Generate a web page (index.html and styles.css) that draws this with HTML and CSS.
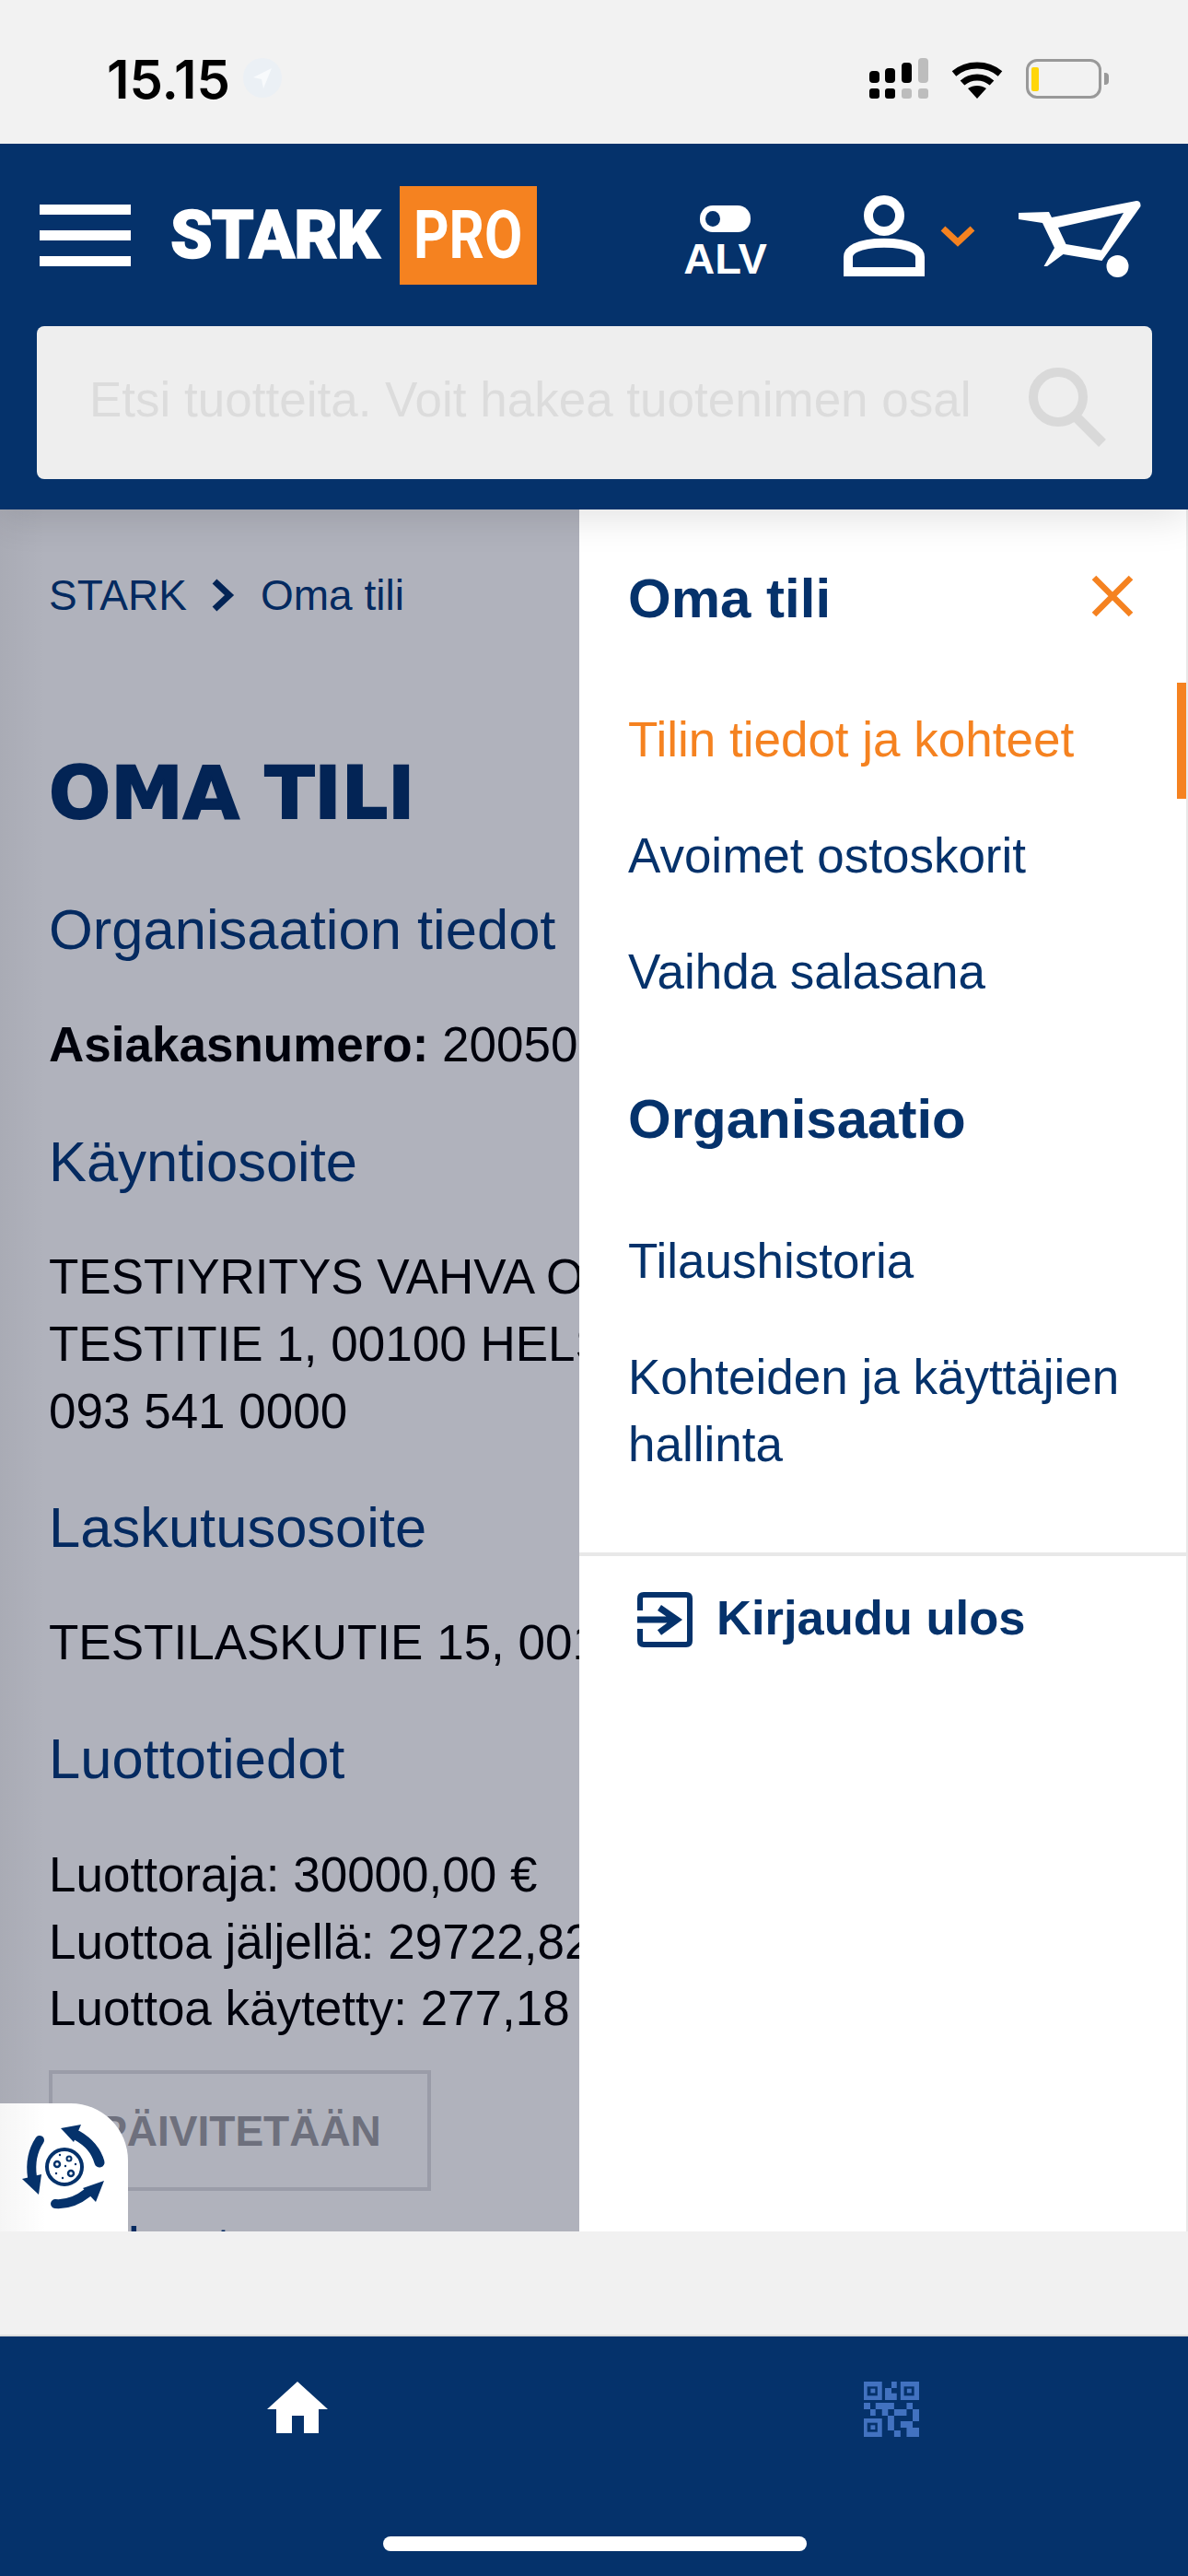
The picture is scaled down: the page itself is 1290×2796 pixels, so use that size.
FILE: index.html
```html
<!DOCTYPE html>
<html lang="fi">
<head>
    <meta charset="UTF-8">
    <meta name="viewport" content="width=device-width, initial-scale=1.0">
    <title>Oma tili - STARK PRO</title>
    <link rel="stylesheet" href="styles.css">
</head>
<body>
    <!-- Phone status bar -->
    <div class="status-bar">
        <div class="status-left">
            <span class="status-time">15.15</span>
            <span class="location-pill">
                <svg width="22" height="24" viewBox="0 0 22 24"><path d="M21 1 L1 11 L10 13 L12 23 Z" fill="#f8fafc"/></svg>
            </span>
        </div>
        <div class="status-right">
            <svg class="signal-icon" width="64" height="44" viewBox="0 0 64 44">
                <rect x="0" y="14" width="11" height="13" rx="4" fill="#000"/>
                <rect x="17" y="11" width="11" height="16" rx="4" fill="#000"/>
                <rect x="35" y="5" width="11" height="22" rx="4" fill="#000"/>
                <rect x="53" y="0" width="11" height="27" rx="4" fill="#bdbdbd"/>
                <rect x="0" y="33" width="11" height="11" rx="3" fill="#000"/>
                <rect x="17" y="33" width="11" height="11" rx="3" fill="#000"/>
                <rect x="35" y="33" width="11" height="11" rx="3" fill="#bdbdbd"/>
                <rect x="53" y="33" width="11" height="11" rx="3" fill="#bdbdbd"/>
            </svg>
            <svg class="wifi-icon" width="56" height="42" viewBox="0 0 56 42">
                <path d="M3 15 C17 3 39 3 53 15" fill="none" stroke="#000" stroke-width="7"/>
                <path d="M12 25 C21 17 35 17 44 25" fill="none" stroke="#000" stroke-width="7"/>
                <path d="M18 31 C24 27 32 27 38 31 L28 42 Z" fill="#000"/>
            </svg>
            <div class="battery">
                <div class="battery-level"></div>
            </div>
            <div class="battery-nub"></div>
        </div>
    </div>

    <header class="site-header">
        <div class="header-row">
            <div class="hamburger">
                <span></span>
                <span></span>
                <span></span>
            </div>
            <div class="logo">
                <span class="logo-stark">STARK</span>
                <span class="logo-pro"><span class="logo-pro-text">PRO</span></span>
            </div>
            <div class="alv-toggle">
                <span class="alv-switch"></span>
                <span class="alv-label">ALV</span>
            </div>
            <svg class="user-icon" width="88" height="88" viewBox="0 0 88 88">
                <ellipse cx="44" cy="22" rx="17" ry="17" fill="none" stroke="#fff" stroke-width="10"/>
                <path d="M5 83 V67 Q5 61 13 57 C27 50 61 50 75 57 Q83 61 83 67 V83 Z" fill="none" stroke="#fff" stroke-width="10"/>
            </svg>
            <svg class="user-chevron" width="38" height="24" viewBox="0 0 38 24">
                <path d="M3 4 L19 19 L35 4" fill="none" stroke="#f58220" stroke-width="7"/>
            </svg>
            <svg class="cart-icon" width="133" height="84" viewBox="0 0 133 84">
                <path fill-rule="evenodd" fill="#fff" d="M0 13 L33 12 L36 18 L128 0 Q133 0 132.5 6 L90.5 65 L48.5 58 L31 71 L27.5 71 L39 51 L26 24 L0 20 Z M43 29 L51.5 47 L90 53.5 L114 13 Z"/>
                <ellipse cx="107.5" cy="71" rx="12" ry="12" fill="#fff"/>
            </svg>
        </div>
        <div class="search-box">
            <span class="search-placeholder">Etsi tuotteita. Voit hakea tuotenimen osal</span>
            <svg class="search-icon" width="88" height="88" viewBox="0 0 88 88">
                <circle cx="34" cy="34" r="27" fill="none" stroke="#d9d9d9" stroke-width="10"/>
                <path d="M52 54 L82 84" fill="none" stroke="#d9d9d9" stroke-width="11"/>
            </svg>
        </div>
    </header>

    <main class="account-view">
        <div class="account-content">
            <nav class="breadcrumb">
                <span>STARK</span>
                <svg width="26" height="38" viewBox="0 0 26 38"><path d="M4 4 L20 19 L4 34" fill="none" stroke="#05326b" stroke-width="7"/></svg>
                <span class="breadcrumb-current">Oma tili</span>
            </nav>
            <h1 class="page-title">OMA TILI</h1>
            <h2 class="section-title">Organisaation tiedot</h2>
            <p class="info"><strong>Asiakasnumero:</strong> 20050012</p>
            <h2 class="section-title">Käyntiosoite</h2>
            <p class="info">TESTIYRITYS VAHVA OY<br>TESTITIE 1, 00100 HELSINKI<br>093 541 0000</p>
            <h2 class="section-title">Laskutusosoite</h2>
            <p class="info">TESTILASKUTIE 15, 00100 HELSINKI</p>
            <h2 class="section-title">Luottotiedot</h2>
            <p class="info info-credit">Luottoraja: 30000,00 €<br>Luottoa jäljellä: 29722,82 €<br>Luottoa käytetty: 277,18 €</p>
            <button class="refresh-btn">PÄIVITETÄÄN</button>
            <h2 class="section-title section-last">Maksut</h2>
        </div>

        <div class="dim-overlay"></div>

        <!-- Floating widget, over the dimmed page -->
        <div class="recycle-widget">
            <svg width="139" height="139" viewBox="0 0 139 139">
                <g fill="none" stroke="#05326b" stroke-linecap="round">
                    <path d="M108 64 C104 50 96 42 84 35" stroke-width="11"/>
                    <path d="M43 40 C35 52 33 66 35 80" stroke-width="10"/>
                    <path d="M60 109 C73 110 85 105 95 97" stroke-width="10"/>
                    <circle cx="70" cy="69" r="19" stroke-width="4"/>
                    <circle cx="62" cy="66" r="3" stroke-width="2.5"/>
                    <circle cx="75" cy="60" r="2.5" stroke-width="2"/>
                    <circle cx="77" cy="76" r="3" stroke-width="2.5"/>
                </g>
                <g fill="#05326b">
                    <path d="M66 27 L88 23 L80 42 Z"/>
                    <path d="M24 82 L45 77 L42 99 Z"/>
                    <path d="M113 84 L90 92 L104 107 Z"/>
                    <circle cx="65" cy="56" r="1.2"/>
                    <circle cx="71" cy="68" r="1.2"/>
                    <circle cx="82" cy="66" r="1.2"/>
                    <circle cx="61" cy="76" r="1.2"/>
                    <circle cx="68" cy="81" r="1.2"/>
                </g>
            </svg>
        </div>

        <aside class="account-menu">
            <div class="menu-head">
                <h3 class="menu-title">Oma tili</h3>
                <svg class="menu-close" width="46" height="46" viewBox="0 0 46 46">
                    <path d="M3 3 L43 43 M43 3 L3 43" fill="none" stroke="#f58220" stroke-width="6.5"/>
                </svg>
            </div>
            <ul class="menu-list menu-list-first">
                <li class="menu-item active">Tilin tiedot ja kohteet</li>
                <li class="menu-item">Avoimet ostoskorit</li>
                <li class="menu-item">Vaihda salasana</li>
            </ul>
            <h3 class="menu-title menu-title-second">Organisaatio</h3>
            <ul class="menu-list">
                <li class="menu-item">Tilaushistoria</li>
                <li class="menu-item">Kohteiden ja käyttäjien hallinta</li>
            </ul>
            <div class="menu-logout">
                <svg width="60" height="60" viewBox="0 0 60 60">
                    <path d="M3 20 V7 Q3 3 7 3 H53 Q57 3 57 7 V53 Q57 57 53 57 H7 Q3 57 3 53 V40" fill="none" stroke="#05326b" stroke-width="6"/>
                    <path d="M0 30 H41 M24 17 L43 30 L24 44" fill="none" stroke="#05326b" stroke-width="7"/>
                </svg>
                <span class="logout-label">Kirjaudu ulos</span>
            </div>
        </aside>
    </main>

    <div class="page-gap"></div>

    <footer class="bottom-nav">
        <div class="bottom-cell">
            <svg width="66" height="56" viewBox="0 0 66 56">
                <path d="M33 0 L66 30 H56 V56 H40 V37 H27 V56 H10 V30 H0 Z" fill="#fff"/>
            </svg>
        </div>
        <div class="bottom-cell">
            <svg width="60" height="60" viewBox="715 555 146 180" preserveAspectRatio="none" fill="#4272c0">
                <rect x="715" y="555" width="48" height="60"/>
                <rect x="812" y="555" width="49" height="60"/>
                <rect x="715" y="675" width="48" height="60"/>
                <rect x="724" y="571" width="27" height="30" fill="#05326b"/>
                <rect x="821" y="571" width="27" height="30" fill="#05326b"/>
                <rect x="724" y="689" width="27" height="30" fill="#05326b"/>
                <rect x="733" y="578" width="12" height="14"/>
                <rect x="829" y="578" width="12" height="14"/>
                <rect x="733" y="697" width="12" height="14"/>
                <rect x="788" y="555" width="14" height="21"/>
                <rect x="771" y="576" width="17" height="39"/>
                <rect x="788" y="593" width="14" height="22"/>
                <rect x="715" y="624" width="17" height="21"/>
                <rect x="732" y="645" width="14" height="21"/>
                <rect x="746" y="624" width="49" height="21"/>
                <rect x="763" y="645" width="16" height="21"/>
                <rect x="795" y="645" width="33" height="21"/>
                <rect x="828" y="624" width="16" height="21"/>
                <rect x="844" y="645" width="17" height="39"/>
                <rect x="778" y="666" width="17" height="48"/>
                <rect x="795" y="714" width="17" height="21"/>
                <rect x="812" y="684" width="32" height="21"/>
                <rect x="828" y="705" width="33" height="30"/>
            </svg>
        </div>
        <div class="home-indicator"></div>
    </footer>
</body>
</html>
```

FILE: styles.css
```css
* {
    margin: 0;
    padding: 0;
    box-sizing: border-box;
}

body {
    font-family: 'Liberation Sans', Arial, sans-serif;
    background: #fff;
    color: #000;
    width: 1290px;
    height: 2796px;
    overflow: hidden;
}

/* status bar */
.status-bar {
    position: relative;
    z-index: 4;
    height: 156px;
    background: #f2f2f2;
    display: flex;
    justify-content: space-between;
    padding: 63px 86px 0 116px;
}

.status-left {
    display: flex;
    align-items: flex-start;
    gap: 14px;
}

.status-time {
    font-family: Inter, sans-serif;
    font-weight: 600;
    font-size: 58px;
    line-height: 46px;
}

.location-pill {
    width: 42px;
    height: 43px;
    border-radius: 21px;
    background: #ebf0f5;
    display: flex;
    align-items: center;
    justify-content: center;
}

.status-right {
    display: flex;
    align-items: flex-start;
}

.wifi-icon {
    margin: 2px 0 0 25px;
}

.battery {
    width: 82px;
    height: 43px;
    margin: 1px 0 0 25px;
    border: 3px solid #999;
    border-radius: 12px;
    padding: 6px 3px;
}

.battery-level {
    width: 8px;
    height: 26px;
    border-radius: 2px;
    background: #ffd60a;
}

.battery-nub {
    width: 5px;
    height: 13px;
    margin: 16px 0 0 3px;
    border-radius: 0 4px 4px 0;
    background: #999;
}

/* header */
.site-header {
    position: relative;
    z-index: 3;
    height: 397px;
    background: #05326b;
    padding-top: 46px;
    box-shadow: 0 8px 40px rgba(0, 0, 0, 0.12);
}

.header-row {
    display: flex;
    align-items: center;
    height: 107px;
    padding-left: 43px;
}

.hamburger {
    width: 99px;
    display: flex;
    flex-direction: column;
    gap: 17px;
}

.hamburger span {
    height: 11px;
    background: #fff;
}

.logo {
    display: flex;
    align-items: center;
    margin-left: 43px;
}

.logo-stark {
    width: 249px;
    font-family: Roboto, sans-serif;
    font-weight: 900;
    font-size: 73px;
    letter-spacing: -1px;
    line-height: 107px;
    color: #fff;
    -webkit-text-stroke: 1.5px #fff;
}

.logo-pro {
    width: 149px;
    height: 107px;
    background: #f58220;
    color: #fff;
    font-family: Roboto, sans-serif;
    font-weight: 700;
    font-size: 73px;
    line-height: 107px;
    text-align: center;
}

.logo-pro-text {
    display: inline-block;
    transform: scaleX(0.82);
}

.alv-toggle {
    width: 89px;
    margin-left: 160px;
    margin-top: 12px;
    display: flex;
    flex-direction: column;
    align-items: center;
    gap: 9px;
}

.alv-switch {
    position: relative;
    width: 55px;
    height: 29px;
    border-radius: 14px;
    background: #fff;
}

.alv-switch::before {
    content: '';
    position: absolute;
    top: 6px;
    left: 6px;
    width: 16px;
    height: 17px;
    border-radius: 50%;
    background: #05326b;
}

.alv-label {
    font-weight: 700;
    font-size: 47px;
    line-height: 40px;
    color: #fff;
}

.user-icon {
    margin-left: 84px;
}

.user-chevron {
    margin-left: 17px;
}

.cart-icon {
    margin: 8px 0 0 47px;
}

.search-box {
    height: 166px;
    margin: 45px 39px 0 40px;
    border-radius: 8px;
    background: #eee;
    display: flex;
    align-items: center;
    padding: 0 48px 0 57px;
}

.search-placeholder {
    flex: 1;
    overflow: hidden;
    white-space: nowrap;
    padding-bottom: 7px;
    font-size: 53px;
    color: #dcdcdc;
}

.search-icon {
    margin: 8px 0 0 64px;
}

/* account page, dimmed behind the menu */
.account-view {
    position: relative;
    height: 1869px;
    overflow: hidden;
}

.account-view::after {
    content: '';
    position: absolute;
    top: 0;
    bottom: 0;
    left: 0;
    width: 50px;
    background: linear-gradient(to right, rgba(0, 0, 0, 0.04), rgba(0, 0, 0, 0));
}

.account-content {
    padding: 63px 0 0 53px;
    width: 1290px;
}

.breadcrumb {
    display: flex;
    align-items: center;
    gap: 26px;
    font-size: 46px;
    line-height: 60px;
    color: #063a7a;
}

.breadcrumb-current {
    margin-left: 2px;
}

.page-title {
    margin: 140px 0 67px;
    font-family: 'DejaVu Sans', sans-serif;
    font-weight: 700;
    font-size: 79px;
    line-height: 90px;
    color: #05326b;
    -webkit-text-stroke: 2px #05326b;
}

.section-title {
    margin-bottom: 53.4px;
    font-weight: 400;
    font-size: 61.5px;
    line-height: 72px;
    color: #063a7a;
}

.info {
    margin-bottom: 53.4px;
    font-size: 53px;
    line-height: 72.8px;
    white-space: nowrap;
}

.info-credit {
    margin-bottom: 30px;
}

.refresh-btn {
    display: block;
    width: 415px;
    height: 131px;
    margin-bottom: 25px;
    background: transparent;
    border: 4px solid #e0e0e2;
    font-family: inherit;
    font-weight: 700;
    font-size: 46px;
    color: #a0a0a4;
}

.dim-overlay {
    position: absolute;
    inset: 0;
    background: rgba(0, 5, 40, 0.31);
}

.recycle-widget {
    position: absolute;
    left: 0;
    bottom: 0;
    width: 139px;
    height: 139px;
    background: #fff;
    border-top-right-radius: 62px;
}

.account-menu {
    position: absolute;
    z-index: 1;
    top: 0;
    bottom: 0;
    left: 629px;
    right: 0;
    background: #fff;
    border-right: 2px solid #e8e8e8;
    padding-top: 61px;
}

.menu-head {
    display: flex;
    justify-content: space-between;
    align-items: center;
    padding: 0 57px 0 53px;
}

.menu-close {
    margin-top: -6px;
}

.menu-title {
    font-size: 60px;
    line-height: 72px;
    font-weight: 700;
    color: #05326b;
}

.menu-title-second {
    margin: 61.6px 0 0 53px;
}

.menu-list {
    list-style: none;
    margin-top: 54.4px;
}

.menu-list-first {
    margin-top: 53.4px;
}

.menu-item {
    padding: 26.5px 60px 26.5px 53px;
    font-size: 53px;
    line-height: 73px;
    color: #05326b;
}

.menu-item.active {
    position: relative;
    color: #f58220;
}

.menu-item.active::after {
    content: '';
    position: absolute;
    top: 2px;
    right: 0;
    width: 10px;
    height: 126px;
    background: #f58220;
}

.menu-logout {
    display: flex;
    align-items: center;
    gap: 26px;
    margin-top: 55px;
    padding: 36px 0 0 63px;
    border-top: 4px solid #e8e8e8;
    font-size: 52.5px;
    font-weight: 700;
    color: #05326b;
}

.logout-label {
    margin-bottom: 5px;
}

/* band under the page and bottom navigation */
.page-gap {
    height: 112px;
    background: #f1f1f1;
}

.bottom-nav {
    position: relative;
    height: 262px;
    background: #05326b;
    border-top: 2px solid #ddd;
    display: flex;
    padding-top: 49px;
}

.bottom-cell {
    width: 645px;
    display: flex;
    justify-content: center;
    align-items: flex-start;
}

.home-indicator {
    position: absolute;
    left: 416px;
    bottom: 27px;
    width: 460px;
    height: 16px;
    border-radius: 8px;
    background: #fff;
}
```
